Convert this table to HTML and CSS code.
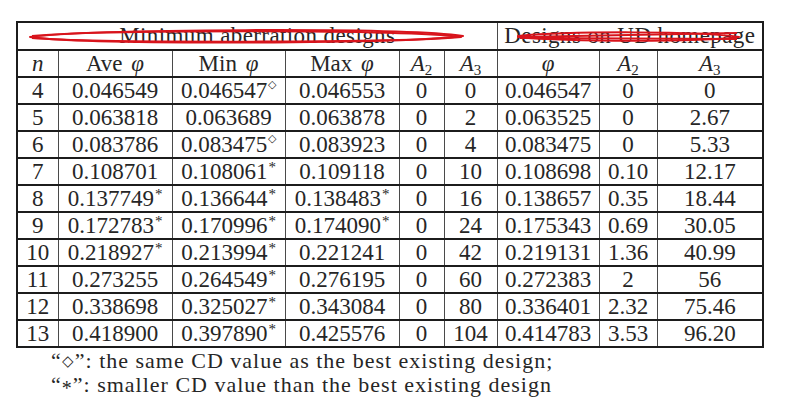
FILE: index.html
```html
<!DOCTYPE html>
<html lang="en">
<head>
    <meta charset="UTF-8">
    <title>Minimum aberration designs</title>
    <link rel="stylesheet" href="styles.css">
</head>
<body>
    <div class="page">
        <div class="table-wrap">
            <table class="cd-table">
                <colgroup>
                    <col class="c-n"><col class="c-ave"><col class="c-min"><col class="c-max">
                    <col class="c-a2"><col class="c-a3"><col class="c-phi"><col class="c-ua2"><col class="c-ua3">
                </colgroup>
                <tr class="group-row">
                    <td colspan="6">Minimum aberration designs</td>
                    <td colspan="3">Designs on UD homepage</td>
                </tr>
                <tr class="head-row">
                    <td><i>n</i></td>
                    <td>Ave <i>&phi;</i></td>
                    <td>Min <i>&phi;</i></td>
                    <td>Max <i>&phi;</i></td>
                    <td><i>A</i><sub>2</sub></td>
                    <td><i>A</i><sub>3</sub></td>
                    <td><i>&phi;</i></td>
                    <td><i>A</i><sub>2</sub></td>
                    <td><i>A</i><sub>3</sub></td>
                </tr>
                <tr><td>4</td><td>0.046549</td><td>0.046547<sup class="dia">&#9671;</sup></td><td>0.046553</td><td>0</td><td>0</td><td>0.046547</td><td>0</td><td>0</td></tr>
                <tr><td>5</td><td>0.063818</td><td>0.063689</td><td>0.063878</td><td>0</td><td>2</td><td>0.063525</td><td>0</td><td>2.67</td></tr>
                <tr><td>6</td><td>0.083786</td><td>0.083475<sup class="dia">&#9671;</sup></td><td>0.083923</td><td>0</td><td>4</td><td>0.083475</td><td>0</td><td>5.33</td></tr>
                <tr><td>7</td><td>0.108701</td><td>0.108061<sup>*</sup></td><td>0.109118</td><td>0</td><td>10</td><td>0.108698</td><td>0.10</td><td>12.17</td></tr>
                <tr><td>8</td><td>0.137749<sup>*</sup></td><td>0.136644<sup>*</sup></td><td>0.138483<sup>*</sup></td><td>0</td><td>16</td><td>0.138657</td><td>0.35</td><td>18.44</td></tr>
                <tr><td>9</td><td>0.172783<sup>*</sup></td><td>0.170996<sup>*</sup></td><td>0.174090<sup>*</sup></td><td>0</td><td>24</td><td>0.175343</td><td>0.69</td><td>30.05</td></tr>
                <tr><td>10</td><td>0.218927<sup>*</sup></td><td>0.213994<sup>*</sup></td><td>0.221241</td><td>0</td><td>42</td><td>0.219131</td><td>1.36</td><td>40.99</td></tr>
                <tr><td>11</td><td>0.273255</td><td>0.264549<sup>*</sup></td><td>0.276195</td><td>0</td><td>60</td><td>0.272383</td><td>2</td><td>56</td></tr>
                <tr><td>12</td><td>0.338698</td><td>0.325027<sup>*</sup></td><td>0.343084</td><td>0</td><td>80</td><td>0.336401</td><td>2.32</td><td>75.46</td></tr>
                <tr><td>13</td><td>0.418900</td><td>0.397890<sup>*</sup></td><td>0.425576</td><td>0</td><td>104</td><td>0.414783</td><td>3.53</td><td>96.20</td></tr>
            </table>

            <!-- red pen marks drawn over the group headers -->
            <svg class="pen-marks" width="800" height="60" viewBox="0 0 800 60">
                <path d="M30,37 C 90,29 400,27 463,36 C 400,44 90,45 30,37 Z" />
                <path d="M32,36 C 95,30 398,29 461,37 C 398,43 95,43 32,38" />
                <path d="M518,36 C 570,31 700,31 739,37 C 700,42 570,42 518,37 Z" />
                <path d="M520,37 L 737,33 M520,38 L 737,39" />
            </svg>
        </div>

        <div class="notes">
            <div>&ldquo;<span class="note-dia">&#9671;</span>&rdquo;: the same CD value as the best existing design;</div>
            <div>&ldquo;<span class="note-ast">*</span>&rdquo;: smaller CD value than the best existing design</div>
        </div>
    </div>
</body>
</html>
```

FILE: styles.css
```css
* {
    margin: 0;
    padding: 0;
    box-sizing: border-box;
}

body {
    font-family: 'Liberation Serif', 'Times New Roman', serif;
    background: #ffffff;
    color: #262626;
    width: 800px;
    height: 405px;
    overflow: hidden;
}

.page {
    padding: 21px 0 0 16px;
}

.table-wrap {
    position: relative;
    width: 746px;
}

.cd-table {
    width: 746px;
    border-collapse: collapse;
    table-layout: fixed;
    font-size: 23px;
}

.c-n { width: 41px; }
.c-ave { width: 114px; }
.c-min { width: 113px; }
.c-max { width: 114px; }
.c-a2 { width: 45px; }
.c-a3 { width: 53px; }
.c-phi { width: 102px; }
.c-ua2 { width: 58px; }
.c-ua3 { width: 106px; }

.cd-table tr {
    height: 27px;
}

.cd-table .group-row {
    height: 28px;
}

.cd-table .group-row td {
    letter-spacing: 0.4px;
}

.cd-table .head-row td {
    word-spacing: 3px;
}

.cd-table td {
    text-align: center;
    vertical-align: middle;
    white-space: nowrap;
    line-height: 22px;
    padding: 0;
    border-top: 2px solid #1c1c1c;
    border-bottom: 2px solid #1c1c1c;
    border-left: 1px solid #4a4a4a;
    border-right: 1px solid #4a4a4a;
}

.cd-table tr td:first-child {
    border-left: 2px solid #1c1c1c;
}

.cd-table tr td:last-child {
    border-right: 2px solid #1c1c1c;
}

.cd-table sup {
    font-size: 15px;
    vertical-align: 7px;
    line-height: 0;
    margin-left: 1px;
}

.cd-table sup.dia {
    font-size: 11px;
    vertical-align: 10px;
}

.cd-table sub {
    font-size: 15px;
    vertical-align: -4px;
    line-height: 0;
}

.pen-marks {
    position: absolute;
    left: -16px;
    top: -21px;
    pointer-events: none;
}

.pen-marks path {
    fill: none;
    stroke: #d8141c;
    stroke-width: 2;
    stroke-linejoin: round;
}

.notes {
    padding: 1px 0 0 35px;
    font-size: 22px;
    line-height: 23px;
    letter-spacing: 1px;
}

.note-dia {
    font-size: 15px;
    vertical-align: 2px;
}

.note-ast {
    font-size: 20px;
    vertical-align: -3px;
}
```
